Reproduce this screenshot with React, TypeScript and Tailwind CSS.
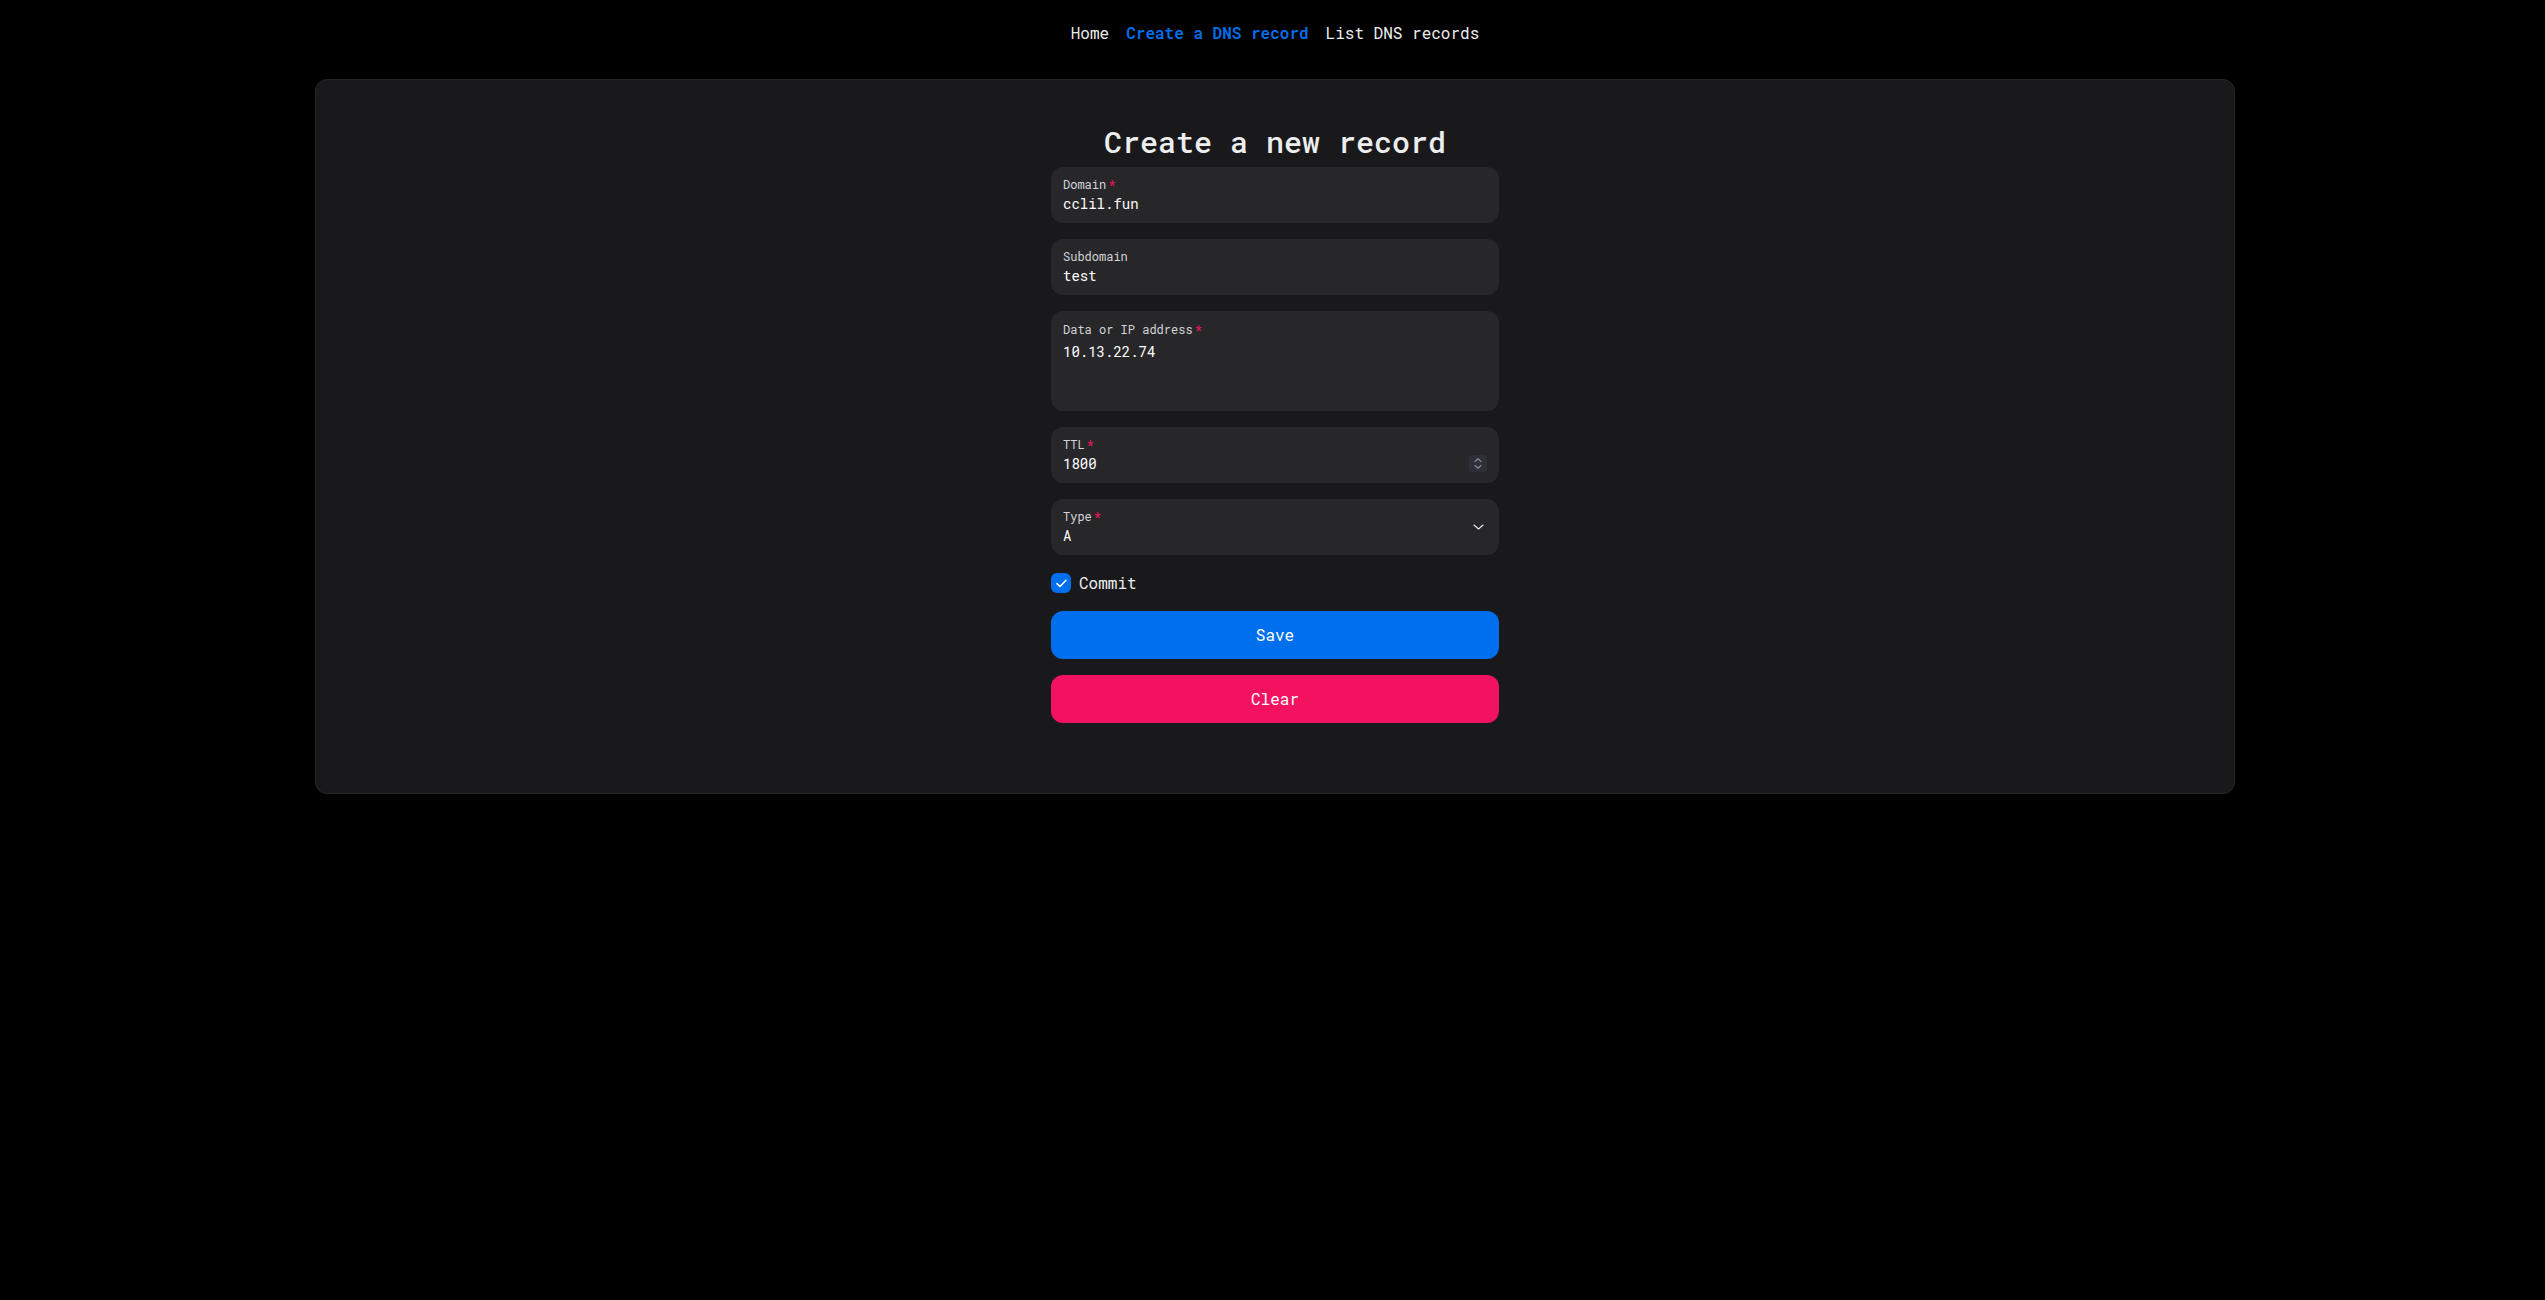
import { useState } from 'react';

const MONO = 'font-["Roboto_Mono","DejaVu_Sans_Mono","Liberation_Mono",monospace]';

function Required() {
  return <span className="text-[#f31260] ml-[2px]">*</span>;
}

interface FieldProps {
  label: string;
  value: string;
  required?: boolean;
  right?: React.ReactNode;
}

function Field({ label, value, required, right }: FieldProps) {
  return (
    <div className="h-14 rounded-xl bg-[#27272a] px-3 flex items-center">
      <div className="flex-1 flex flex-col justify-center gap-[2px]">
        <span className="text-xs leading-4 text-[#d4d4d8]">
          {label}
          {required && <Required />}
        </span>
        <span className="text-sm leading-5 text-white">{value}</span>
      </div>
      {right}
    </div>
  );
}

function Spinner() {
  return (
    <div className="mt-4 w-[18px] h-[17px] rounded-[3px] bg-[#2f2f37] flex items-center justify-center">
      <svg width="10" height="13" viewBox="0 0 10 13" fill="none" stroke="#8a8a94" strokeWidth="1.2" strokeLinecap="round" strokeLinejoin="round">
        <path d="M2 4.5 5 1.8 8 4.5" />
        <path d="M2 8.5 5 11.2 8 8.5" />
      </svg>
    </div>
  );
}

function Chevron() {
  return (
    <svg className="mr-[3px]" width="11" height="6" viewBox="0 0 11 6" fill="none" stroke="#ecedee" strokeWidth="1.1" strokeLinecap="round" strokeLinejoin="round">
      <path d="M1 1 5.5 5 10 1" />
    </svg>
  );
}

export default function App() {
  const [commit, setCommit] = useState(true);

  return (
    <div className={`min-h-screen bg-black text-[#ecedee] pl-[5px] ${MONO}`}>
      <nav className="pt-[21px] flex justify-center gap-[17px] text-base leading-6">
        <a className="text-[#ecedee]">Home</a>
        <a className="text-[#006fee] font-semibold">Create a DNS record</a>
        <a className="text-[#ecedee]">List DNS records</a>
      </nav>

      <main className="mt-[34px] w-[1920px] mx-auto rounded-xl border border-[#26262a] bg-[#19191b] pt-[44px] pb-[70px]">
        <div className="w-[448px] mx-auto flex flex-col">
          <h1 className="text-3xl leading-9 text-center font-medium text-[#ecedee] mb-[7px]">
            Create a new record
          </h1>

          <div className="flex flex-col gap-4">
            <Field label="Domain" value="cclil.fun" required />
            <Field label="Subdomain" value="test" />

            <div className="h-[100px] rounded-xl bg-[#27272a] px-3 pt-[10px] flex flex-col gap-[5px]">
              <span className="text-xs leading-4 text-[#d4d4d8]">
                Data or IP address
                <Required />
              </span>
              <span className="text-sm leading-5 text-white">10.13.22.74</span>
            </div>

            <Field label="TTL" value="1800" required right={<Spinner />} />
            <Field label="Type" value="A" required right={<Chevron />} />

            <label className="h-6 flex items-center gap-2 cursor-pointer" onClick={() => setCommit(!commit)}>
              <span
                className={`w-5 h-5 rounded-[6px] flex items-center justify-center ${commit ? 'bg-[#006fee]' : 'border-2 border-[#3f3f46]'}`}
              >
                {commit && (
                  <svg width="11" height="9" viewBox="0 0 11 9" fill="none" stroke="white" strokeWidth="1.6" strokeLinecap="round" strokeLinejoin="round">
                    <path d="M1 4.6 4 7.5 10 1.3" />
                  </svg>
                )}
              </span>
              <span className="text-base leading-6 text-[#ecedee]">Commit</span>
            </label>

            <button className="h-12 rounded-xl bg-[#006fee] text-white text-base">Save</button>
            <button className="h-12 rounded-xl bg-[#f31260] text-white text-base">Clear</button>
          </div>
        </div>
      </main>
    </div>
  );
}
